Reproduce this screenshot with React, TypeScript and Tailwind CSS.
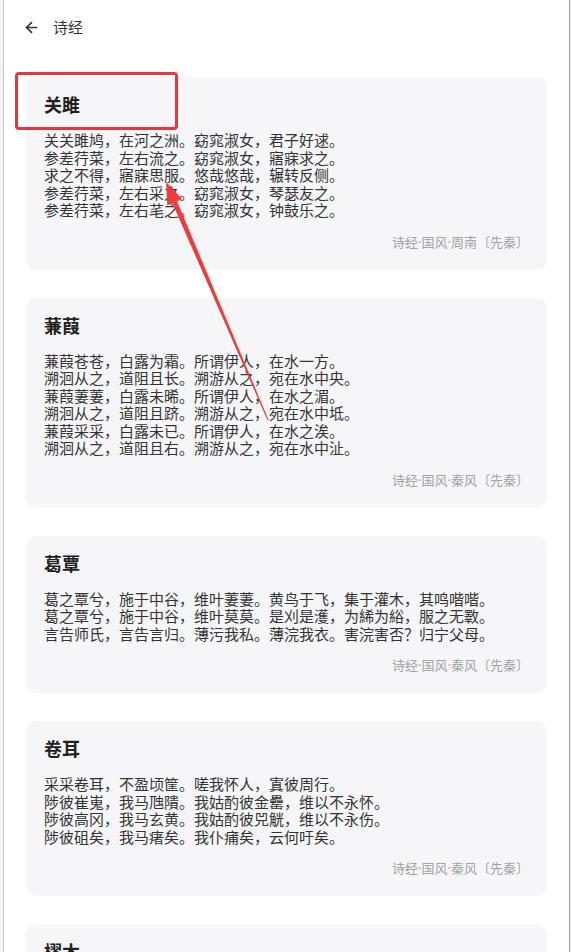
import { ArrowLeft } from "lucide-react";

interface Poem {
  title: string;
  lines: string[];
  source: string;
}

const poems: Poem[] = [
  {
    title: "关雎",
    lines: [
      "关关雎鸠，在河之洲。窈窕淑女，君子好逑。",
      "参差荇菜，左右流之。窈窕淑女，寤寐求之。",
      "求之不得，寤寐思服。悠哉悠哉，辗转反侧。",
      "参差荇菜，左右采之。窈窕淑女，琴瑟友之。",
      "参差荇菜，左右芼之。窈窕淑女，钟鼓乐之。",
    ],
    source: "诗经·国风·周南〔先秦〕",
  },
  {
    title: "蒹葭",
    lines: [
      "蒹葭苍苍，白露为霜。所谓伊人，在水一方。",
      "溯洄从之，道阻且长。溯游从之，宛在水中央。",
      "蒹葭萋萋，白露未晞。所谓伊人，在水之湄。",
      "溯洄从之，道阻且跻。溯游从之，宛在水中坻。",
      "蒹葭采采，白露未已。所谓伊人，在水之涘。",
      "溯洄从之，道阻且右。溯游从之，宛在水中沚。",
    ],
    source: "诗经·国风·秦风〔先秦〕",
  },
  {
    title: "葛覃",
    lines: [
      "葛之覃兮，施于中谷，维叶萋萋。黄鸟于飞，集于灌木，其鸣喈喈。",
      "葛之覃兮，施于中谷，维叶莫莫。是刈是濩，为絺为綌，服之无斁。",
      "言告师氏，言告言归。薄污我私。薄浣我衣。害浣害否？归宁父母。",
    ],
    source: "诗经·国风·秦风〔先秦〕",
  },
  {
    title: "卷耳",
    lines: [
      "采采卷耳，不盈顷筐。嗟我怀人，寘彼周行。",
      "陟彼崔嵬，我马虺隤。我姑酌彼金罍，维以不永怀。",
      "陟彼高冈，我马玄黄。我姑酌彼兕觥，维以不永伤。",
      "陟彼砠矣，我马瘏矣。我仆痡矣，云何吁矣。",
    ],
    source: "诗经·国风·秦风〔先秦〕",
  },
  {
    title: "樛木",
    lines: [
      "南有樛木，葛藟累之。乐只君子，福履绥之。",
      "南有樛木，葛藟荒之。乐只君子，福履将之。",
      "南有樛木，葛藟萦之。乐只君子，福履成之。",
    ],
    source: "诗经·国风·周南〔先秦〕",
  },
];

const PoemCard = ({ poem }: { poem: Poem }) => (
  <div className="rounded-[10px] bg-[#f6f6f8] px-[18px] pt-4 pb-[19px]">
    {/* Title */}
    <h2 className="text-[18px] font-bold leading-[24px] text-[#222]">{poem.title}</h2>

    {/* Verses */}
    <div className="mt-[15px] text-[15px] leading-[17.5px] text-[#333]">
      {poem.lines.map((line, i) => (
        <p key={i} className="whitespace-nowrap">
          {line}
        </p>
      ))}
    </div>

    {/* Source */}
    <div className="mt-[13px] text-right text-[13px] leading-[18px] text-[#a3a3a3]">
      {poem.source}
    </div>
  </div>
);

export default function App() {
  return (
    <div
      className="relative flex h-[952px] w-[571px] overflow-hidden bg-white"
      style={{ fontFamily: '"Noto Sans", "Noto Sans CJK SC", sans-serif' }}
    >
      {/* window edge */}
      <div className="w-[4px] shrink-0 border-r border-[#c8c8c8] bg-[#f3f3f3]" />

      <div className="flex min-w-0 flex-1 flex-col">
        {/* Header */}
        <header className="flex h-[54px] shrink-0 items-center gap-[13px] pl-[19px]">
          <ArrowLeft className="h-[17px] w-[17px] text-[#333]" strokeWidth={2.4} />
          <span className="text-[15px] text-[#333]">诗经</span>
        </header>

        {/* Poem list */}
        <main className="flex flex-col gap-[28px] px-[22px] pt-[23px]">
          {poems.map((poem) => (
            <PoemCard key={poem.title} poem={poem} />
          ))}
        </main>
      </div>

      <div className="w-[2px] shrink-0 border-l border-[#9a9a9a] bg-[#f0f0f0]" />

      {/* Red annotation */}
      <div className="pointer-events-none absolute left-[15px] top-[72px] h-[58px] w-[163px] rounded-[4px] border-[3px] border-[#e8373c]" />
      <svg
        className="pointer-events-none absolute left-0 top-0"
        width="571"
        height="952"
        viewBox="0 0 571 952"
      >
        <polygon
          points="166,182 167.3,205.4 172.4,203.2 267.5,420.2 268.5,419.8 177,201.2 182.1,199.1"
          fill="#ef3b3b"
        />
      </svg>
    </div>
  );
}
